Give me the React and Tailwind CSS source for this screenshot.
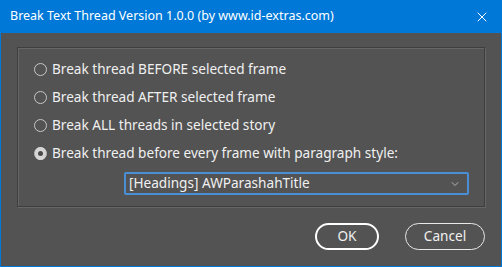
import { X, ChevronDown } from "lucide-react";

const options = [
  "Break thread BEFORE selected frame",
  "Break thread AFTER selected frame",
  "Break ALL threads in selected story",
  "Break thread before every frame with paragraph style:",
];

function Radio({ checked }) {
  return (
    <span className="w-[13px] h-[13px] rounded-full border border-[#c8c8c8] flex items-center justify-center shrink-0 bg-[#535353]">
      {checked && <span className="w-[13px] h-[13px] rounded-full bg-[#d6d6d6] flex items-center justify-center"><span className="w-[5px] h-[5px] rounded-full bg-[#4a4a4a]" /></span>}
    </span>
  );
}

export default function App() {
  return (
    <div className="w-[502px] h-[267px] flex flex-col bg-[#0078d7] font-['Noto_Sans',sans-serif] text-[#f0f0f0]">
      <div className="h-[33px] flex items-center justify-between pl-[10px] pr-[12px] text-white text-[12.5px] shrink-0">
        <span>Break Text Thread Version 1.0.0 (by www.id-extras.com)</span>
        <X size={16} strokeWidth={1.5} />
      </div>
      <div className="flex-1 mx-px mb-px bg-[#535353] flex flex-col px-[16px] pt-[14px]">
        <div className="h-[160px] border border-[#3e3e3e] shadow-[inset_1px_1px_0_#666,1px_1px_0_#666] pt-[7px] pl-[16px] pr-[15px] flex flex-col">
          {options.map((o, i) => (
            <div key={i} className="h-[28px] flex items-center gap-[5px] text-[13.6px]">
              <Radio checked={i === 3} />
              <span>{o}</span>
            </div>
          ))}
          <div className="mt-[5px] ml-[90px] h-[23px] border-2 border-[#4a8fd6] rounded-[2px] flex items-center justify-between pl-[3px] pr-[6px] text-[13.6px]">
            <span>[Headings] AWParashahTitle</span>
            <ChevronDown size={12} strokeWidth={1.5} className="text-[#cfcfcf]" />
          </div>
        </div>
        <div className="flex justify-end gap-[26px] mt-[16px]">
          <button className="w-[64px] h-[27px] rounded-full border-2 border-white text-[13.6px] text-[#f0f0f0]">OK</button>
          <button className="w-[80px] h-[27px] rounded-full border border-[#e8e8e8] text-[13.6px] text-[#f0f0f0]">Cancel</button>
        </div>
      </div>
    </div>
  );
}
